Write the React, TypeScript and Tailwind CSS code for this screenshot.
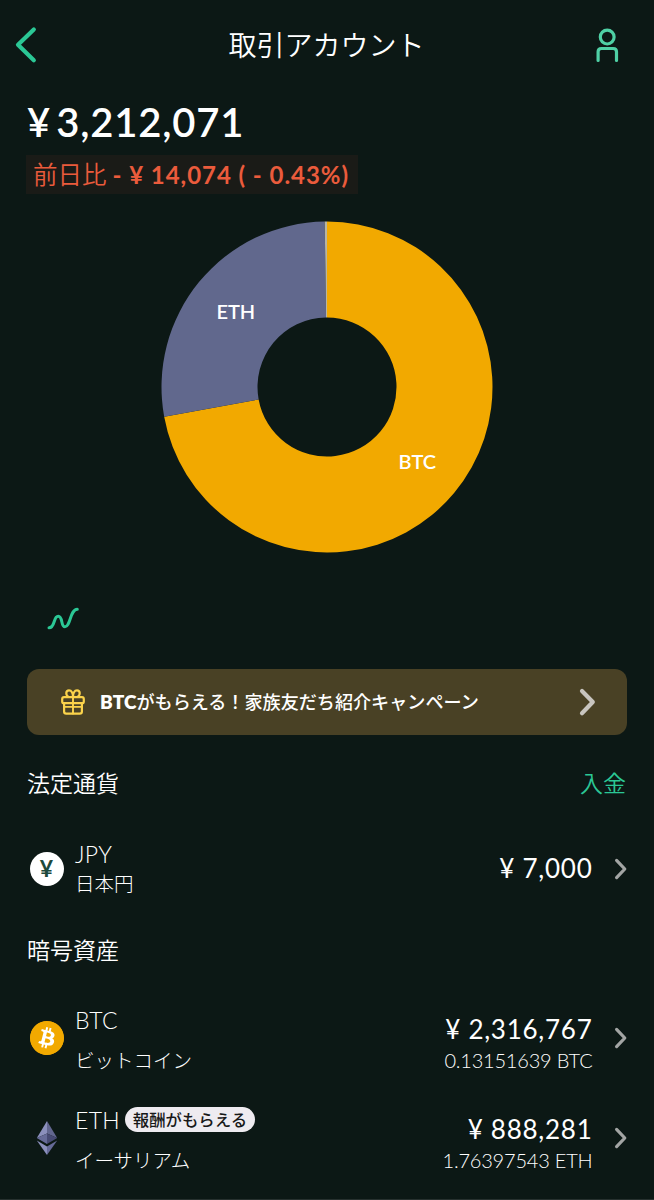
import type { ReactNode } from "react";
import { SiBitcoin } from "react-icons/si";

const CX = 166;
const OUTER = 165.5;
const INNER = 69.5;

function slice(start: number, end: number) {
  const point = (r: number, t: number) => {
    const a = t * Math.PI * 2 - Math.PI / 2;
    return `${(CX + r * Math.cos(a)).toFixed(2)} ${(CX + r * Math.sin(a)).toFixed(2)}`;
  };
  const large = end - start > 0.5 ? 1 : 0;
  return `M${point(OUTER, start)} A${OUTER} ${OUTER} 0 ${large} 1 ${point(OUTER, end)} L${point(INNER, end)} A${INNER} ${INNER} 0 ${large} 0 ${point(INNER, start)} Z`;
}

function Donut() {
  return (
    <svg width="332" height="332" viewBox="0 0 332 332">
      <path d={slice(0, 0.7213)} fill="#f2a900" />
      <path d={slice(0.7213, 0.9978)} fill="#61688d" />
      <path d={slice(0.9978, 1)} fill="#b9b5a2" />
      <text x="74.8" y="98" textAnchor="middle" fontSize="20" fontWeight="600" fill="#fff">ETH</text>
      <text x="256.3" y="248" textAnchor="middle" fontSize="20" fontWeight="600" fill="#fff">BTC</text>
    </svg>
  );
}

function RowChevron() {
  return (
    <svg width="14" height="22" viewBox="0 0 14 22" fill="none" className="shrink-0">
      <path d="M2.6 2.4 L10.8 11 L2.6 19.6" stroke="#a3a5a4" strokeWidth="3.2" strokeLinecap="round" strokeLinejoin="round" />
    </svg>
  );
}

function GiftIcon() {
  return (
    <svg width="26" height="28" viewBox="0 0 26 28" fill="none" stroke="#fbd34b" strokeWidth="2.2" strokeLinecap="round" strokeLinejoin="round">
      <rect x="2.2" y="9.2" width="21.6" height="6" rx="1.8" />
      <path d="M4.1 15.4 V23.6 Q4.1 25.7 6.2 25.7 H19.8 Q21.9 25.7 21.9 23.6 V15.4" />
      <path d="M13 9 V25.5 M4.4 18.9 H21.6" strokeWidth="1.9" />
      <path d="M13 9 C13 5 11.5 2.4 9 2.4 C5.6 2.4 5.4 7 8.4 8.9 M13 9 C13 5 14.5 2.4 17 2.4 C20.4 2.4 20.6 7 17.6 8.9" />
    </svg>
  );
}

function BtcIcon() {
  return (
    <svg width="34" height="34" viewBox="0 0 34 34">
      <circle cx="17" cy="17" r="16.8" fill="#f2a900" />
      <circle cx="17" cy="17" r="12" fill="#fff" />
      <SiBitcoin size={34} color="#f2a900" />
    </svg>
  );
}

function EthIcon() {
  return (
    <svg width="22" height="34" viewBox="0 0 22 34">
      <path d="M11 0 L0.8 17 L11 12.4Z" fill="#8b8fbc" />
      <path d="M11 0 L21.2 17 L11 12.4Z" fill="#62668f" />
      <path d="M0.8 17 L11 12.4 V23Z" fill="#666a98" />
      <path d="M21.2 17 L11 12.4 V23Z" fill="#474a74" />
      <path d="M0.8 19.4 L11 25.4 V34Z" fill="#8b8fbc" />
      <path d="M21.2 19.4 L11 25.4 V34Z" fill="#666a98" />
    </svg>
  );
}

type RowProps = {
  icon: ReactNode;
  code: string;
  name: string;
  amount: string;
  holding?: string;
  badge?: string;
  leftClass: string;
  rightClass: string;
};

function AssetRow({ icon, code, name, amount, holding, badge, leftClass, rightClass }: RowProps) {
  return (
    <div className="flex h-[100px] items-center pr-[26px] pl-[29px]">
      <div className="flex w-[35px] justify-center">{icon}</div>
      <div className={`ml-[11px] flex flex-col ${leftClass}`}>
        <div className="flex h-[26px] items-center gap-[5px]">
          <span className="text-[23px] leading-[26px] font-light tracking-[0.3px]">{code}</span>
          {badge && (
            <span className="flex h-[25px] w-[130px] items-center justify-center rounded-full bg-[#eeebf0] text-[16.4px] leading-[25px] font-medium whitespace-nowrap text-[#181818]">
              {badge}
            </span>
          )}
        </div>
        <div className="text-[19.5px] leading-[26px] font-light">{name}</div>
      </div>
      <div className={`ml-auto flex flex-col items-end whitespace-nowrap ${rightClass}`}>
        <div className="text-[26px] leading-8 tracking-[0.75px]">{amount}</div>
        {holding && <div className="text-[20px] leading-[30px] font-light tracking-[-0.2px]">{holding}</div>}
      </div>
      <div className="ml-[21.5px]">
        <RowChevron />
      </div>
    </div>
  );
}

export default function App() {
  return (
    <div className="flex h-[1200px] w-[654px] flex-col overflow-hidden border-b border-[#27312f] bg-[#0c1815] font-['Lato','Noto_Sans_CJK_JP',sans-serif] text-white">
      <header className="flex h-[90px] items-center justify-between pr-[32px] pl-[14px]">
        <svg width="38" height="38" viewBox="0 0 38 38" fill="none">
          <path d="M19.8 3.5 L4 18.8 L19.8 34.3" stroke="#2bc795" strokeWidth="4.2" strokeLinecap="round" strokeLinejoin="round" />
        </svg>
        <h1 className="ml-[7px] text-[28px] leading-[40px] font-[350]">取引アカウント</h1>
        <svg width="28" height="36" viewBox="0 0 28 36" fill="none" stroke="#4fd0a5" strokeWidth="3.2" strokeLinecap="round" strokeLinejoin="round">
          <circle cx="13.2" cy="10.1" r="6.9" />
          <path d="M4.1 33.4 V24.8 Q4.1 21.5 7.4 21.5 H19.2 Q22.5 21.5 22.5 24.8 V33.4" />
        </svg>
      </header>

      <div className="flex h-[63px] items-center gap-[6px] pl-[27px] text-[40px] leading-[60px] font-semibold">
        <span>¥</span>
        <span className="tracking-[0.8px]">3,212,071</span>
      </div>
      <div className="mt-[2px] ml-[26px] flex h-[39px] w-[332px] items-center bg-[#1a1b17] pl-[7px] text-[24px] leading-[37px] font-bold whitespace-nowrap text-[#eb5b3c]">
        <span className="-mt-px text-[24.5px] font-[350]">前日比</span>
        <span className="-mt-px ml-1.5 tracking-[0.95px]">- ¥ 14,074 ( - 0.43%)</span>
      </div>

      <div className="mt-[27px] flex justify-center">
        <Donut />
      </div>

      <div className="mt-[52px] pl-[46px]">
        <svg width="34" height="26" viewBox="0 0 34 26" fill="none" className="block">
          <path d="M3 22.8 C9.5 22.8 7 11.2 12.2 11.2 C17.2 11.2 14.5 21.8 19 21.8 C24.5 21.8 24 4.2 31.3 4.2" stroke="#2bc795" strokeWidth="3" strokeLinecap="round" />
        </svg>
      </div>

      <div className="mt-[38px] ml-[27px] flex h-[66px] w-[600px] items-center rounded-xl bg-[#494125] pr-[30px] pl-[33px]">
        <GiftIcon />
        <div className="ml-3.5 text-[18.1px] leading-7 font-medium whitespace-nowrap">
          <span className="text-[19px] font-extrabold">BTC</span>がもらえる！家族友だち紹介キャンペーン
        </div>
        <svg width="20" height="30" viewBox="0 0 20 30" fill="none" className="ml-auto">
          <path d="M5 4 L15.8 15 L5 26.2" stroke="#c8c5bf" strokeWidth="4.2" strokeLinecap="round" strokeLinejoin="round" />
        </svg>
      </div>

      <div className="flex h-[96px] items-center justify-between pr-7 pl-[27px] pt-px text-[23px] font-[350]">
        <h2>法定通貨</h2>
        <span className="text-[#2bc795]">入金</span>
      </div>

      <div className="-mt-[12px]">
        <AssetRow
          icon={
            <div className="flex size-[34px] items-center justify-center rounded-full bg-white pb-0.5 text-[23px] leading-none font-bold text-[#1d4a3c]">¥</div>
          }
          code="JPY"
          name="日本円"
          amount="¥ 7,000"
          leftClass="gap-1"
          rightClass="pb-0.5"
        />
      </div>

      <div className="flex h-[62px] items-center px-[27px] text-[23px] font-[350]">
        <h2>暗号資産</h2>
      </div>

      <div className="mt-[7px] flex flex-col">
        <AssetRow
          icon={<BtcIcon />}
          code="BTC"
          name="ビットコイン"
          amount="¥ 2,316,767"
          holding="0.13151639 BTC"
          leftClass="gap-[15px] pt-[4px]"
          rightClass="pt-[11px]"
        />
        <AssetRow
          icon={<EthIcon />}
          code="ETH"
          name="イーサリアム"
          badge="報酬がもらえる"
          amount="¥ 888,281"
          holding="1.76397543 ETH"
          leftClass="gap-[15px] pt-[4px]"
          rightClass="pt-[11px]"
        />
      </div>
    </div>
  );
}
